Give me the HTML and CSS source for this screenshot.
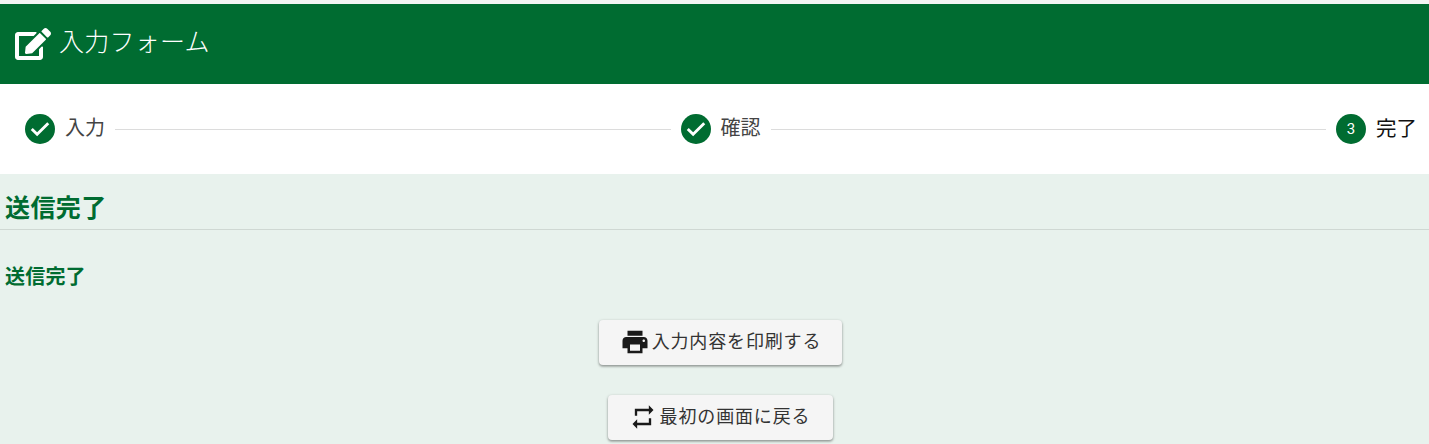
FILE: index.html
```html
<!DOCTYPE html>
<html lang="ja">
  <head>
    <meta charset="UTF-8" />
    <meta name="viewport" content="width=device-width, initial-scale=1.0" />
    <title>入力フォーム</title>
    <link rel="stylesheet" href="styles.css">
  </head>
  <body>
    <header class="form-header">
      <svg class="header-icon" viewBox="0 0 576 512" fill="currentColor">
        <path d="M402.6 83.2l90.2 90.2c3.8 3.8 3.8 10 0 13.8L274.4 405.6l-92.8 10.3c-12.4 1.4-22.9-9.1-21.5-21.5l10.3-92.8L388.8 83.2c3.8-3.8 10-3.8 13.8 0zm162-22.9l-48.8-48.8c-15.2-15.2-39.9-15.2-55.2 0l-35.4 35.4c-3.8 3.8-3.8 10 0 13.8l90.2 90.2c3.8 3.8 10 3.8 13.8 0l35.4-35.4c15.2-15.3 15.2-40 0-55.2zM384 346.2V448H64V128h229.8c3.2 0 6.2-1.3 8.5-3.5l40-40c7.6-7.6 2.2-20.5-8.5-20.5H48C21.5 64 0 85.5 0 112v352c0 26.5 21.5 48 48 48h352c26.5 0 48-21.5 48-48V306.2c0-10.7-12.9-16-20.5-8.5l-40 40c-2.2 2.3-3.5 5.3-3.5 8.5z" />
      </svg>
      <span class="header-title">入力フォーム</span>
    </header>

    <div class="stepper">
      <div class="step">
        <svg class="step-icon" viewBox="0 0 24 24">
          <circle cx="12" cy="12" r="12" fill="#006c31" />
          <path d="M9.7 17.8L4.6 12.7l1.6-1.6 3.5 3.5 8.1-8.1 1.6 1.6z" fill="#fff" />
        </svg>
        <span class="step-label">入力</span>
      </div>
      <div class="step-line"></div>
      <div class="step">
        <svg class="step-icon" viewBox="0 0 24 24">
          <circle cx="12" cy="12" r="12" fill="#006c31" />
          <path d="M9.7 17.8L4.6 12.7l1.6-1.6 3.5 3.5 8.1-8.1 1.6 1.6z" fill="#fff" />
        </svg>
        <span class="step-label">確認</span>
      </div>
      <div class="step-line"></div>
      <div class="step">
        <span class="step-number">3</span>
        <span class="step-label step-active">完了</span>
      </div>
    </div>

    <main class="content">
      <h2 class="section-title">送信完了</h2>
      <p class="message">送信完了</p>

      <div class="actions">
        <button class="action-btn" type="button">
          <svg class="print-icon" viewBox="0 0 24 24" fill="currentColor">
            <path d="M19 8H5c-1.66 0-3 1.34-3 3v6h4v4h12v-4h4v-6c0-1.66-1.34-3-3-3zm-3 11H8v-5h8v5zm3-7c-.55 0-1-.45-1-1s.45-1 1-1 1 .45 1 1-.45 1-1 1zm-1-9H6v4h12V3z" />
          </svg>
          <span class="btn-text">入力内容を印刷する</span>
        </button>
        <button class="action-btn back-btn" type="button">
          <svg class="repeat-icon" viewBox="0 0 24 24" fill="currentColor">
            <path d="M7 7h10v3l4-4-4-4v3H5v6h2V7zm10 10H7v-3l-4 4 4 4v-3h12v-6h-2v4z" />
          </svg>
          <span class="btn-text">最初の画面に戻る</span>
        </button>
      </div>
    </main>
  </body>
</html>
```
FILE: styles.css
```css
html {
  height: 100%;
}

body {
  margin: 0;
  height: 100%;
  overflow: hidden;
  padding-top: 4px;
  box-sizing: border-box;
  background: #f2f5f3;
  font-family: "Noto Sans CJK JP", sans-serif;
  color: #333;
  display: flex;
  flex-direction: column;
}

.form-header {
  height: 80px;
  background: #006c31;
  color: #fff;
  display: flex;
  align-items: center;
  padding-left: 15px;
  gap: 8px;
  flex: none;
}

.header-icon {
  width: 36px;
  height: 32px;
}

.header-title {
  font-size: 25px;
  letter-spacing: 0.25px;
  line-height: 32px;
  margin-top: -8px;
  font-weight: 300;
}

.stepper {
  height: 90px;
  background: #fff;
  display: flex;
  align-items: center;
  padding: 0 12px 0 25px;
  flex: none;
}

.step {
  display: flex;
  align-items: center;
  gap: 10px;
}

.step-icon {
  width: 30px;
  height: 30px;
}

.step-number {
  width: 30px;
  height: 30px;
  border-radius: 50%;
  background: #006c31;
  color: #fff;
  font-family: "Roboto", sans-serif;
  font-size: 15px;
  display: flex;
  align-items: center;
  justify-content: center;
}

.step-label {
  font-size: 20px;
  color: #444;
  line-height: 28px;
  margin-top: -5px;
}

.step-active {
  font-size: 20.5px;
  color: #111;
}

.step-line {
  flex: 1;
  height: 1px;
  background: #dcdcdc;
  margin: 0 10px;
}

.content {
  flex: 1;
  background: #e8f2ed;
}

.section-title {
  margin: 0;
  padding: 15px 5px 5px;
  height: 35px;
  line-height: 35px;
  font-size: 25px;
  letter-spacing: 0.4px;
  font-weight: 700;
  color: #006c31;
  border-bottom: 1px solid #cfd8d3;
}

.message {
  margin: 0;
  padding: 33px 5px 0;
  line-height: 26px;
  font-size: 20px;
  letter-spacing: 0.2px;
  font-weight: 700;
  color: #006c31;
}

.actions {
  margin-top: 31px;
  padding-left: 12px;
  display: flex;
  flex-direction: column;
  align-items: center;
  gap: 30px;
}

.action-btn {
  height: 45px;
  border: none;
  border-radius: 4px;
  background: #f5f5f5;
  color: #333;
  font-family: inherit;
  font-size: 18px;
  box-shadow: 0 1px 3px rgba(0, 0, 0, 0.35), 0 2px 2px rgba(0, 0, 0, 0.12);
  display: flex;
  align-items: center;
  padding: 0 21px 2px;
  letter-spacing: 0.85px;
}

.back-btn {
  padding-right: 23px;
}

.btn-text {
  margin-bottom: 4px;
}

.print-icon {
  width: 30px;
  height: 30px;
  color: #1a1a1a;
  margin-right: 2px;
}

.repeat-icon {
  width: 28px;
  height: 28px;
  color: #1a1a1a;
  margin-right: 3px;
}
```
